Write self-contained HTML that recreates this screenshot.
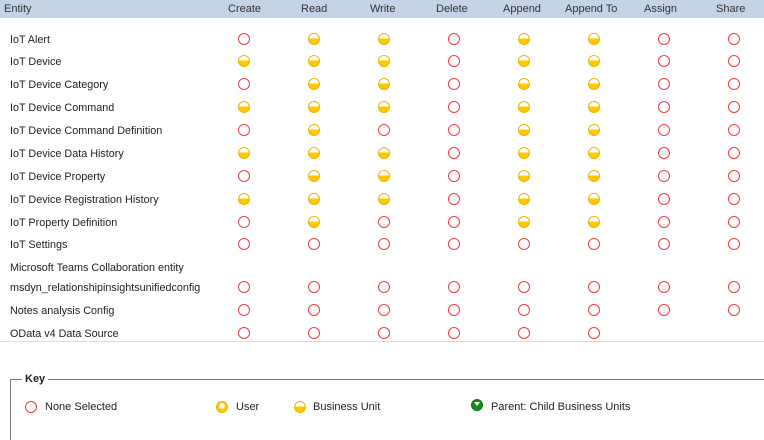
<!DOCTYPE html>
<html><head><style>
body{margin:0;width:764px;height:427px;background:#fff;font-family:"Liberation Sans",sans-serif;font-size:11px;color:#222;position:relative;overflow:hidden}
.hd{position:absolute;left:0;top:0;width:764px;height:18px;background:#c5d3e6}
.hd span{position:absolute;top:3px;color:#333}
.r{position:absolute;left:0;height:16px;width:764px}
.r .n{position:absolute;left:10px;top:1px;white-space:nowrap;font-size:10.8px}
.i{position:absolute;top:0px;width:12px;height:12px;box-sizing:border-box;border-radius:50%}
.o{border:1.5px solid #f03c3c}
.h{border:1px solid #e8b800;background:linear-gradient(#fff 0,#fff 45%,#ffc800 45%)}
</style></head><body>
<div class="hd">
<span style="left:4px">Entity</span>
<span style="left:228px">Create</span>
<span style="left:301px">Read</span>
<span style="left:370px">Write</span>
<span style="left:436px">Delete</span>
<span style="left:503px">Append</span>
<span style="left:565px">Append To</span>
<span style="left:644px">Assign</span>
<span style="left:716px">Share</span>
</div>
<div id="g"></div>
<div style="position:absolute;left:0;top:341px;width:764px;height:1px;background:#ddd"></div>
<div style="position:absolute;left:10px;top:379px;width:760px;height:60px;border-top:1px solid #777;border-left:1px solid #777"></div>
<div style="position:absolute;left:22px;top:373px;background:#fff;padding:0 3px;font-weight:bold">Key</div>
<div class="i o" style="left:25px;top:401px"></div>
<div style="position:absolute;left:45px;top:401px">None Selected</div>
<div class="i" style="left:216px;top:401px;border:1px solid #e8b800;background:radial-gradient(circle at 50% 40%,#fff 0,#fff 35%,#ffc800 36%)"></div>
<div style="position:absolute;left:236px;top:401px">User</div>
<div class="i h" style="left:294px;top:401px"></div>
<div style="position:absolute;left:313px;top:401px">Business Unit</div>
<div class="i" style="left:471px;top:399px;background:#1a8a1a;border:1px solid #137013"></div>
<div style="position:absolute;left:474px;top:402px;width:0;height:0;border-left:3px solid transparent;border-right:3px solid transparent;border-top:4px solid #fff"></div>
<div style="position:absolute;left:491px;top:401px">Parent: Child Business Units</div>
<script>
var rows=[
["IoT Alert",33,"ohhohhoo"],
["IoT Device",55,"hhhohhoo"],
["IoT Device Category",78,"ohhohhoo"],
["IoT Device Command",101,"hhhohhoo"],
["IoT Device Command Definition",124,"ohoohhoo"],
["IoT Device Data History",147,"hhhohhoo"],
["IoT Device Property",170,"ohhohhoo"],
["IoT Device Registration History",193,"hhhohhoo"],
["IoT Property Definition",216,"ohoohhoo"],
["IoT Settings",238,"oooooooo"],
["Microsoft Teams Collaboration entity",261,""],
["msdyn_relationshipinsightsunifiedconfig",281,"oooooooo"],
["Notes analysis Config",304,"oooooooo"],
["OData v4 Data Source",327,"oooooo"]];
var h="";
rows.forEach(function(r){h+='<div class="r" style="top:'+r[1]+'px"><span class="n">'+r[0]+'</span>';
for(var k=0;k<r[2].length;k++)h+='<div class="i '+r[2][k]+'" style="left:'+(238+70*k)+'px"></div>';
h+='</div>';});
document.getElementById("g").innerHTML=h;
</script>
</body></html>
